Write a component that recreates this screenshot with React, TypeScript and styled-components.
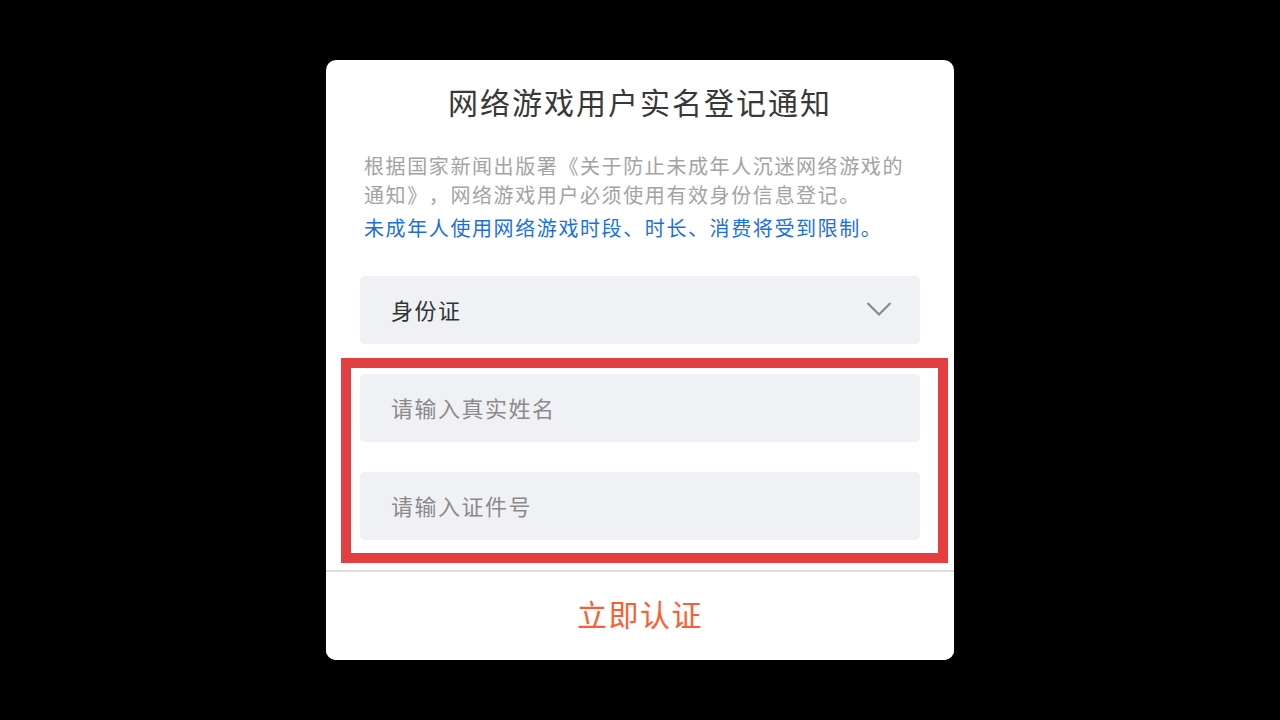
import React from "react";
import styled, { createGlobalStyle } from "styled-components";

const GlobalStyle = createGlobalStyle`
  html, body {
    margin: 0;
    padding: 0;
    background: #000;
  }
  body {
    font-family: "Noto Sans CJK SC", "Noto Sans", sans-serif;
    text-spacing-trim: space-all;
  }
`;

const Screen = styled.div`
  width: 1280px;
  height: 720px;
  display: flex;
  align-items: center;
  justify-content: center;
  background: #000;
`;

const Card = styled.div`
  width: 628px;
  height: 600px;
  background: #fff;
  border-radius: 10px;
  display: flex;
  flex-direction: column;
  overflow: hidden;
`;

const Body = styled.div`
  flex: 1;
  padding: 21px 34px 0;
  display: flex;
  flex-direction: column;
`;

const Title = styled.h1`
  margin: 0;
  font-size: 30px;
  line-height: 40px;
  font-weight: 400;
  letter-spacing: 2px;
  color: #383838;
  text-align: center;
`;

const Notice = styled.p<{ $tone: "gray" | "blue" }>`
  margin: ${(p) => (p.$tone === "gray" ? "30px 0 0" : "4px 0 0")};
  padding-left: 4px;
  max-width: 550px;
  font-size: 20px;
  letter-spacing: 1.6px;
  line-height: 29px;
  text-spacing-trim: space-all;
  color: ${(p) => (p.$tone === "gray" ? "#a3a3a3" : "#1a6fe6")};
`;

const Field = styled.div`
  height: 68px;
  border-radius: 5px;
  background: #f0f1f5;
  display: flex;
  align-items: center;
  justify-content: space-between;
  padding: 0 28px 3px 31px;
  box-sizing: border-box;
`;

const FieldText = styled.span<{ $placeholder?: boolean }>`
  font-size: 22px;
  letter-spacing: 1.5px;
  color: ${(p) => (p.$placeholder ? "#8a8a8a" : "#333")};
`;

const SelectField = styled(Field)`
  margin-top: 34px;
`;

const Highlight = styled.div`
  margin: 14px -28px 0 -19px;
  border: 10px solid #e43f40;
  padding: 6px 18px 13px 9px;
  display: flex;
  flex-direction: column;
  gap: 30px;
`;

const Footer = styled.button`
  height: 90px;
  border: none;
  border-top: 2px solid #dedede;
  background: #fff;
  font-family: inherit;
  font-size: 30px;
  letter-spacing: 1.5px;
  color: #fe5d31;
  cursor: pointer;
  padding: 0 0 6px;
`;

const Chevron = () => (
  <svg width="26" height="16" viewBox="0 0 26 16" fill="none">
    <path d="M1.5 2 L13 13.5 L24.5 2" stroke="#8a8a8a" strokeWidth="2.2" />
  </svg>
);

const App = () => {
  return (
    <Screen>
      <GlobalStyle />
      <Card>
        <Body>
          <Title>网络游戏用户实名登记通知</Title>
          <Notice $tone="gray">
            根据国家新闻出版署《关于防止未成年人沉迷网络游戏的通知》，网络游戏用户必须使用有效身份信息登记。
          </Notice>
          <Notice $tone="blue">未成年人使用网络游戏时段、时长、消费将受到限制。</Notice>
          <SelectField>
            <FieldText>身份证</FieldText>
            <Chevron />
          </SelectField>
          <Highlight>
            <Field>
              <FieldText $placeholder>请输入真实姓名</FieldText>
            </Field>
            <Field>
              <FieldText $placeholder>请输入证件号</FieldText>
            </Field>
          </Highlight>
        </Body>
        <Footer>立即认证</Footer>
      </Card>
    </Screen>
  );
};

export default App;
